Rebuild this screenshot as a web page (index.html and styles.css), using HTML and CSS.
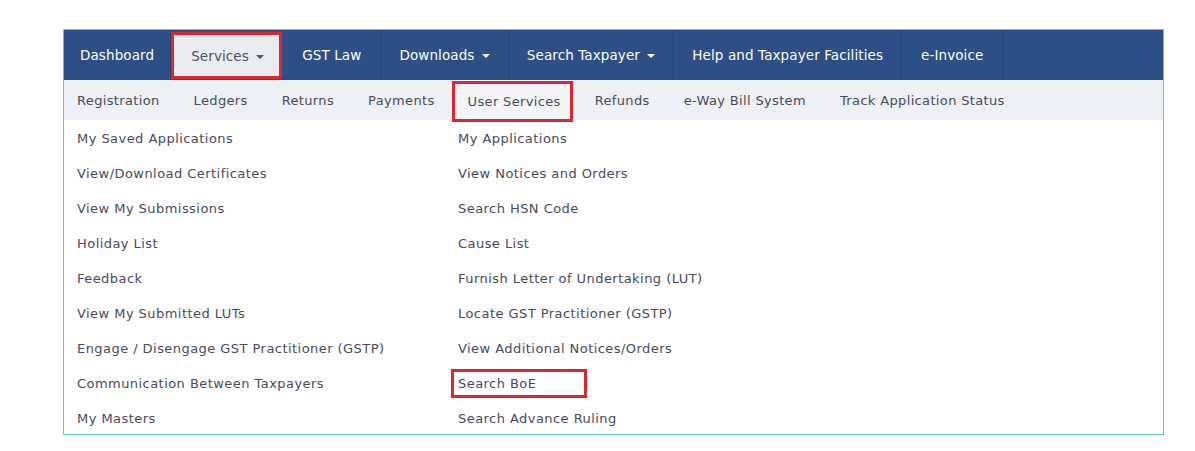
FILE: index.html
```html
<!DOCTYPE html>
<html lang="en">
<head>
    <meta charset="UTF-8">
    <meta name="viewport" content="width=device-width, initial-scale=1.0">
    <title>Services - User Services</title>
    <link rel="stylesheet" href="styles.css">
</head>
<body>
    <div class="frame">
        <ul class="main-nav">
            <li><a href="#">Dashboard</a></li>
            <li class="active marked"><a href="#">Services <span class="caret"></span></a></li>
            <li><a href="#">GST Law</a></li>
            <li><a href="#">Downloads <span class="caret"></span></a></li>
            <li><a href="#">Search Taxpayer <span class="caret"></span></a></li>
            <li><a href="#">Help and Taxpayer Facilities</a></li>
            <li><a href="#">e-Invoice</a></li>
        </ul>
        <ul class="sub-nav">
            <li><a href="#">Registration</a></li>
            <li><a href="#">Ledgers</a></li>
            <li><a href="#">Returns</a></li>
            <li><a href="#">Payments</a></li>
            <li class="active marked"><a href="#">User Services</a></li>
            <li><a href="#">Refunds</a></li>
            <li><a href="#">e-Way Bill System</a></li>
            <li><a href="#">Track Application Status</a></li>
        </ul>
        <div class="menu-list">
            <a href="#">My Saved Applications</a>
            <a href="#">My Applications</a>
            <a href="#">View/Download Certificates</a>
            <a href="#">View Notices and Orders</a>
            <a href="#">View My Submissions</a>
            <a href="#">Search HSN Code</a>
            <a href="#">Holiday List</a>
            <a href="#">Cause List</a>
            <a href="#">Feedback</a>
            <a href="#">Furnish Letter of Undertaking (LUT)</a>
            <a href="#">View My Submitted LUTs</a>
            <a href="#">Locate GST Practitioner (GSTP)</a>
            <a href="#">Engage / Disengage GST Practitioner (GSTP)</a>
            <a href="#">View Additional Notices/Orders</a>
            <a href="#">Communication Between Taxpayers</a>
            <a href="#"><span class="boxed">Search BoE</span></a>
            <a href="#">My Masters</a>
            <a href="#">Search Advance Ruling</a>
        </div>
    </div>
</body>
</html>
```

FILE: styles.css
```css
body {
    margin: 0;
    padding: 29px 0 0 63px;
    background-color: #ffffff;
    font-family: "DejaVu Sans", Verdana, sans-serif;
}

a {
    text-decoration: none;
    color: inherit;
}

ul {
    list-style: none;
    margin: 0;
    padding: 0;
}

.frame {
    width: 1099px;
    border: 1px solid #5ec9cd;
}

/* top bar */
.main-nav {
    display: flex;
    height: 50px;
    background-color: #2c4f86;
}

.main-nav li {
    display: flex;
    align-items: center;
    border-right: 1px solid #244475;
}

.main-nav a {
    padding: 0 18px;
    color: #ffffff;
    font-size: 13.5px;
    letter-spacing: 0.1px;
    white-space: nowrap;
}

.main-nav li:first-child a {
    padding: 0 16px;
}

.main-nav li:nth-child(3) a {
    padding: 0 19px 0 20px;
}

.main-nav li:last-child a {
    padding: 0 19px;
}

.main-nav li.active {
    background-color: #e9ecf1;
}

.main-nav li.active a {
    color: #4d5368;
}

.main-nav li.marked {
    margin: 2px 0 1px;
    border: 3px solid #e0262d;
}

.main-nav li.marked a {
    padding: 0 15px 0 17px;
}

.caret {
    display: inline-block;
    width: 0;
    height: 0;
    margin-left: 3px;
    vertical-align: middle;
    border-top: 4px solid;
    border-left: 4px solid transparent;
    border-right: 4px solid transparent;
}

/* second bar */
.sub-nav {
    display: flex;
    height: 40px;
    background-color: #edf0f4;
}

.sub-nav li {
    display: flex;
    align-items: center;
}

.sub-nav a {
    padding: 0 17px;
    color: #4a4c5a;
    font-size: 13px;
    letter-spacing: 0.35px;
    white-space: nowrap;
}

.sub-nav li:first-child a {
    padding-left: 13px;
}

.sub-nav li.marked {
    height: 35px;
    margin: 1px 5px 0 0;
    align-self: flex-start;
    border: 3px solid #e0262d;
    background-color: #f3f4f6;
}

.sub-nav li.marked a {
    padding: 0 9px 0 13px;
}

/* dropdown links */
.menu-list {
    display: grid;
    grid-template-columns: 381px 1fr;
    grid-auto-rows: 35px;
    padding: 1px 0 0 13px;
    height: 313px;
}

.menu-list a {
    display: flex;
    align-items: center;
    color: #4a4a5c;
    font-size: 13px;
    letter-spacing: 0.45px;
}

.boxed {
    display: inline-block;
    margin-left: -7px;
    padding: 4px 48px 4px 4px;
    border: 3px solid #e0262d;
}
```
